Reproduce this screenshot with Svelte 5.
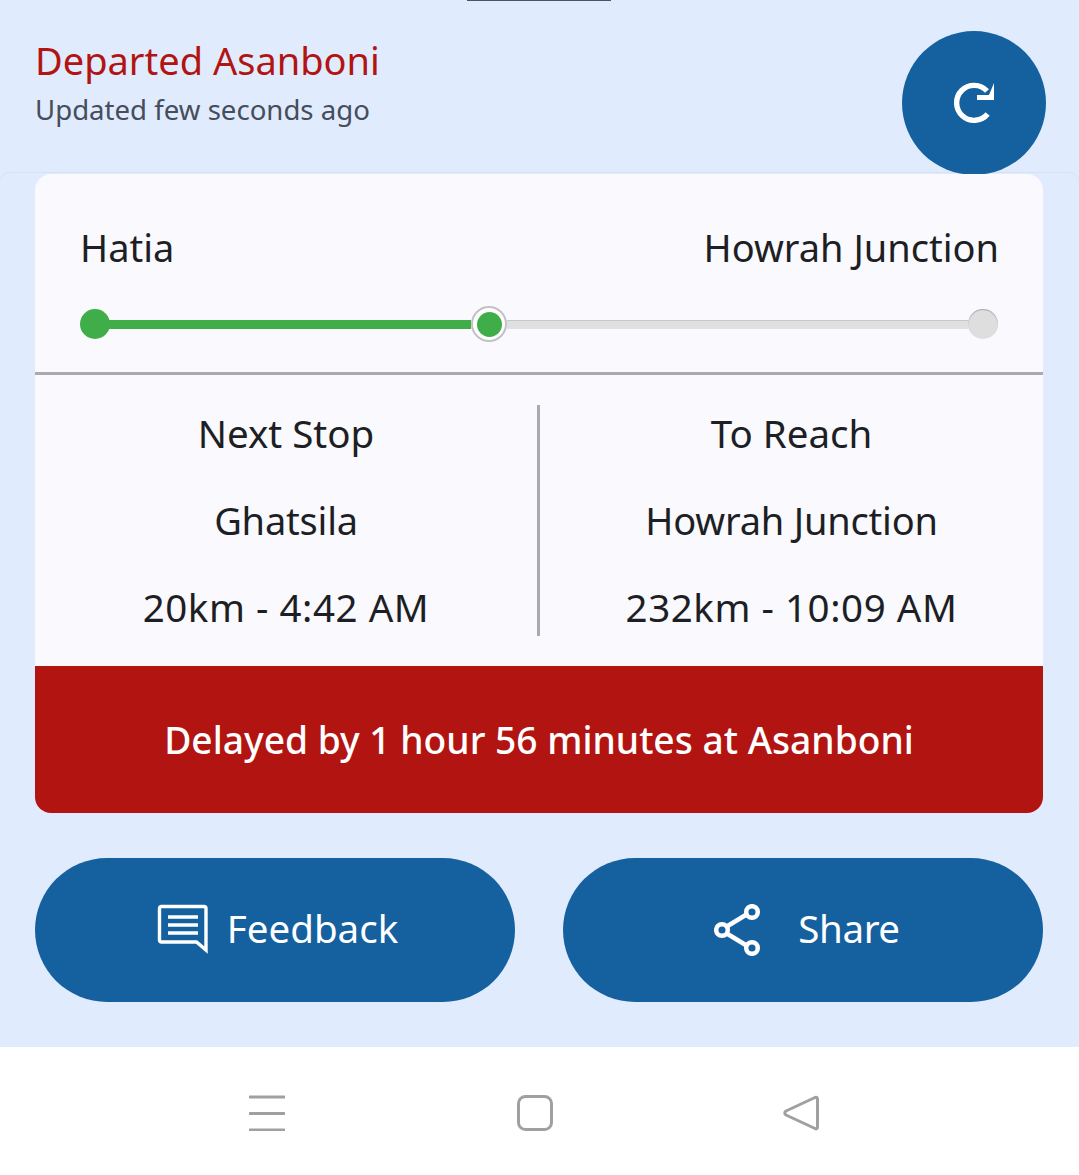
<script>
  const columns = [
    { lines: ['Next Stop', 'Ghatsila', '20km - 4:42 AM'] },
    { lines: ['To Reach', 'Howrah Junction', '232km - 10:09 AM'] }
  ];
</script>

<div class="page">
  <div class="handle"></div>
  <header>
    <div class="status">
      <div class="title">Departed Asanboni</div>
      <div class="sub">Updated few seconds ago</div>
    </div>
    <button class="fab" aria-label="Refresh">
      <svg width="48" height="48" viewBox="0 0 48 48">
        <path d="M37.600 35A17.500 17.500 0 1 1 37 12" fill="none" stroke="#fff" stroke-width="5.400"/>
        <path d="M44 4V21H27V16H39Z" fill="#fff"/>
      </svg>
    </button>
  </header>

  <section class="sheet">
    <div class="card">
      <div class="route">
        <div class="ends"><span>Hatia</span><span class="dest">Howrah Junction</span></div>
        <div class="progress">
          <span class="dot done"></span>
          <span class="seg done"></span>
          <span class="current"><span></span></span>
          <span class="seg rest"></span>
          <span class="dot"></span>
        </div>
      </div>
      <div class="info">
        {#each columns as col}
          <div class="col">
            {#each col.lines as line}<div>{line}</div>{/each}
          </div>
        {/each}
      </div>
      <div class="banner">Delayed by 1 hour 56 minutes at Asanboni</div>
    </div>
  </section>

  <div class="actions">
    <button class="action">
      <svg width="52" height="52" viewBox="0 0 52 52">
        <path d="M4.500 2.500H47Q49 2.500 49 4.500V46L39.500 38H4.500Q2.500 38 2.500 36V4.500Q2.500 2.500 4.500 2.500Z" fill="none" stroke="#fff" stroke-width="3.400"/>
        <path d="M11 13H41M11 21H41M11 29H41" stroke="#fff" stroke-width="3.400"/>
      </svg>
      <span>Feedback</span>
    </button>
    <button class="action share">
      <svg width="48" height="52" viewBox="0 0 48 52">
        <path d="M12 23L35 9M12 29L35 43" stroke="#fff" stroke-width="4.500"/>
        <circle cx="8" cy="26" r="5.800" fill="#15619f" stroke="#fff" stroke-width="4.500"/>
        <circle cx="38" cy="8" r="5.800" fill="#15619f" stroke="#fff" stroke-width="4.500"/>
        <circle cx="38" cy="44" r="5.800" fill="#15619f" stroke="#fff" stroke-width="4.500"/>
      </svg>
      <span>Share</span>
    </button>
  </div>

  <nav>
    <svg width="36" height="36" viewBox="0 0 36 36">
      <path d="M1 2H35M1 18.500H35M1 35H35" stroke="#a0a0a0" stroke-width="3" stroke-linecap="round"/>
    </svg>
    <svg width="36" height="36" viewBox="0 0 36 36">
      <rect x="1.500" y="1.500" width="33" height="33" rx="7" fill="none" stroke="#a0a0a0" stroke-width="3"/>
    </svg>
    <svg class="back" width="36" height="36" viewBox="0 0 36 36">
      <path d="M32 2.500Q34.500 1.500 34.500 4.500V31.500Q34.500 34.500 32 33.500L3 20Q0.500 18 3 16Z" fill="none" stroke="#a0a0a0" stroke-width="3" stroke-linejoin="round"/>
    </svg>
  </nav>
</div>

<style>
  :global(body) {
    margin: 0;
    background: #e0ebfd;
  }
  .page {
    width: 1079px;
    height: 1175px;
    display: flex;
    flex-direction: column;
    background: #e0ebfd;
    font-family: "Noto Sans", "Open Sans", sans-serif;
    color: #1d1f24;
    overflow: hidden;
    position: relative;
  }
  .handle {
    position: absolute;
    left: 467px;
    top: 0;
    width: 144px;
    height: 1px;
    background: #4a5568;
  }
  header {
    height: 173px;
    box-sizing: border-box;
    padding: 31px 33px 0 35px;
    display: flex;
    justify-content: space-between;
    flex: none;
  }
  .title {
    font-size: 38px;
    line-height: 50px;
    margin-top: 4px;
    color: #b21412;
  }
  .sub {
    font-size: 27.600px;
    line-height: 36px;
    margin-top: 6px;
    color: #464d5b;
  }
  .fab {
    width: 144px;
    height: 144px;
    border-radius: 50%;
    background: #15619f;
    border: 0;
    padding: 0;
    display: flex;
    align-items: center;
    justify-content: center;
    flex: none;
  }
  .sheet {
    height: 640px;
    box-sizing: border-box;
    padding: 1px 36px 0 35px;
    border-radius: 10px;
    box-shadow: 0 -1px 1px rgba(120, 130, 150, 0.09);
    flex: none;
    position: relative;
  }
  .card {
    height: 639px;
    background: #f9f9fe;
    border-radius: 16px;
    overflow: hidden;
    display: flex;
    flex-direction: column;
  }
  .route {
    height: 201px;
    box-sizing: border-box;
    padding: 48px 45px 0 45px;
    border-bottom: 3px solid #a9a9ae;
    flex: none;
  }
  .ends {
    display: flex;
    justify-content: space-between;
    font-size: 38px;
    line-height: 50px;
  }
  .dest {
    margin-right: -1px;
  }
  .progress {
    display: flex;
    align-items: center;
    height: 36px;
    margin-top: 34px;
  }
  .dot {
    width: 30px;
    height: 30px;
    border-radius: 50%;
    background: #dedede;
    box-shadow: inset 0 1px 1px rgba(0, 0, 0, 0.25);
    flex: none;
  }
  .dot.done {
    background: #3fae49;
    box-shadow: none;
    margin-right: -2px;
  }
  .seg {
    flex: 363;
    height: 9px;
    background: #3fae49;
  }
  .seg.rest {
    flex: 461;
    background: #e0e0e0;
    box-shadow: inset 0 1px 0 #c8c8c8;
  }
  .current {
    width: 36px;
    height: 36px;
    box-sizing: border-box;
    border-radius: 50%;
    border: 2px solid #c2c2c4;
    background: #fff;
    display: flex;
    align-items: center;
    justify-content: center;
    flex: none;
  }
  .current span {
    width: 25px;
    height: 25px;
    border-radius: 50%;
    background: #3fae49;
  }
  .info {
    flex: 1;
    display: grid;
    grid-template-columns: 502px 1fr;
    padding: 30px 0;
  }
  .col {
    height: 231px;
    display: flex;
    flex-direction: column;
    gap: 31px;
    text-align: center;
    font-size: 38.500px;
    line-height: 56px;
  }
  .col div:nth-child(2) {
    font-size: 38px;
    letter-spacing: -0.2px;
  }
  .col div:nth-child(3) {
    letter-spacing: 0.55px;
  }
  .col + .col {
    border-left: 3px solid #a9a9ae;
  }
  .banner {
    height: 147px;
    flex: none;
    background: #b21412;
    color: #fff;
    font-size: 37.200px;
    font-weight: 500;
    display: flex;
    align-items: center;
    justify-content: center;
  }
  .actions {
    display: flex;
    justify-content: space-between;
    padding: 45px 36px 0 35px;
    flex: none;
  }
  .action {
    width: 480px;
    height: 144px;
    border: 0;
    border-radius: 72px;
    background: #15619f;
    color: #fff;
    font-family: inherit;
    font-size: 38.500px;
    display: flex;
    align-items: center;
    justify-content: center;
    gap: 18px;
    padding: 0 0 0 5px;
  }
  .action span {
    margin-top: -4px;
  }
  .action.share {
    gap: 36px;
    padding-left: 8px;
    letter-spacing: -0.4px;
  }
  nav {
    margin-top: 45px;
    flex: 1;
    background: #fff;
    display: flex;
    align-items: center;
    justify-content: center;
    gap: 232px;
    padding: 4px 12px 0 0;
  }
  .back {
    margin-left: -2px;
  }
</style>
